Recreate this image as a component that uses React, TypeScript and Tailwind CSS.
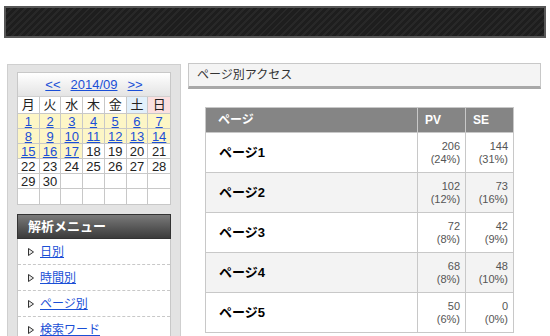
import React from 'react';

const jp = "font-['Liberation_Sans','Noto_Sans_CJK_JP',sans-serif]";

const weeks: (number | null)[][] = [
  [1, 2, 3, 4, 5, 6, 7],
  [8, 9, 10, 11, 12, 13, 14],
  [15, 16, 17, 18, 19, 20, 21],
  [22, 23, 24, 25, 26, 27, 28],
  [29, 30, null, null, null, null, null],
  [null, null, null, null, null, null, null],
];

const days = ['月', '火', '水', '木', '金', '土', '日'];

const menu = ['日別', '時間別', 'ページ別', '検索ワード'];

const rows = [
  { name: 'ページ1', pv: '206', pvp: '(24%)', se: '144', sep: '(31%)' },
  { name: 'ページ2', pv: '102', pvp: '(12%)', se: '73', sep: '(16%)' },
  { name: 'ページ3', pv: '72', pvp: '(8%)', se: '42', sep: '(9%)' },
  { name: 'ページ4', pv: '68', pvp: '(8%)', se: '48', sep: '(10%)' },
  { name: 'ページ5', pv: '50', pvp: '(6%)', se: '0', sep: '(0%)' },
];

function Calendar() {
  return (
    <div className="border border-[#c8c8c8] bg-white">
      <div className="h-[24px] flex items-center justify-center gap-[10px] bg-gradient-to-b from-white to-[#e4e4e4] border-b border-[#d0d0d0] text-[13px] text-[#1a4fd6]">
        <a className="underline cursor-pointer">&lt;&lt;</a>
        <a className="underline cursor-pointer">2014/09</a>
        <a className="underline cursor-pointer">&gt;&gt;</a>
      </div>
      <div className="grid grid-cols-7 text-[13px] leading-[15px]">
        {days.map((d, i) => (
          <div
            key={d}
            className={`h-[17px] leading-[16px] text-center border-b border-[#c8c8c8] ${i < 6 ? 'border-r' : ''} ${
              i === 5 ? 'bg-[#e2f0fb]' : i === 6 ? 'bg-[#fbe0e0]' : 'bg-white'
            } text-[#222]`}
          >
            {d}
          </div>
        ))}
        {weeks.flat().map((n, i) => {
          const linked = n !== null && n <= 17;
          return (
            <div
              key={i}
              className={`h-[15px] text-center border-[#c8c8c8] ${i % 7 < 6 ? 'border-r' : ''} ${
                i < 35 ? 'border-b' : ''
              } ${linked ? 'bg-[#fdf6c6]' : 'bg-white'}`}
            >
              {n !== null &&
                (linked ? (
                  <a className="text-[#1a4fd6] underline">{n}</a>
                ) : (
                  <span className="text-[#222]">{n}</span>
                ))}
            </div>
          );
        })}
      </div>
    </div>
  );
}

function Menu() {
  return (
    <div className="mt-[9px]">
      <div className="h-[25px] flex items-center pl-[10px] bg-gradient-to-b from-[#7a7a7a] to-[#3c3c3c] border border-[#333] text-white font-bold text-[13px]">
        解析メニュー
      </div>
      <div className="bg-white border-x border-[#c8c8c8]">
        {menu.map((m) => (
          <div key={m} className="h-[26px] flex items-center pl-[10px] border-b border-dashed border-[#c8c8c8]">
            <svg width="6" height="8" viewBox="0 0 6 8" className="mr-[6px]">
              <path d="M0.5 0.5 L5.5 4 L0.5 7.5 Z" fill="#e8e8e8" stroke="#333" strokeWidth="1" />
            </svg>
            <a className="text-[12px] text-[#1a4fd6] underline">{m}</a>
          </div>
        ))}
      </div>
    </div>
  );
}

function Num({ a, b }: { a: string; b: string }) {
  return (
    <div className="text-right pr-[5px] text-[11px] leading-[13px] text-[#555]">
      <div>{a}</div>
      <div>{b}</div>
    </div>
  );
}

export default function App() {
  return (
    <div className={`w-[550px] h-[336px] overflow-hidden bg-white ${jp}`}>
      {/* Top bar */}
      <div className="mx-[4px] mt-[6px] h-[32px] border-2 border-[#575757] bg-[repeating-linear-gradient(135deg,#1e1e1e_0px,#1e1e1e_3px,#282828_3px,#282828_5px)]" />

      <div className="flex mt-[25px] pl-[7px] gap-[7px]">
        {/* Sidebar */}
        <div className="w-[174px] h-[280px] shrink-0 mt-[1px] border border-[#cfcfcf] bg-[#e3e3e3] px-[9px] pt-[7px]">
          <Calendar />
          <Menu />
        </div>

        {/* Main */}
        <div className="w-[353px]">
          <div className="h-[26px] flex items-center pl-[8px] bg-[#f4f4f4] border border-[#c8c8c8] border-b-[3px] border-b-[#a8a8a8] text-[12px] text-[#333]">
            ページ別アクセス
          </div>

          <table className="ml-[17px] mt-[18px] w-[309px] border-collapse">
            <thead>
              <tr className="h-[25px] bg-[#858585] text-white text-[12px] font-bold text-left">
                <th className="w-[213px] pl-[12px] border border-[#c8c8c8] font-bold">ページ</th>
                <th className="w-[48px] pl-[7px] border border-[#c8c8c8] font-bold">PV</th>
                <th className="w-[48px] pl-[7px] border border-[#c8c8c8] font-bold">SE</th>
              </tr>
            </thead>
            <tbody>
              {rows.map((r, i) => (
                <tr key={r.name} className={`h-[40px] ${i % 2 === 1 ? 'bg-[#f3f3f3]' : 'bg-white'}`}>
                  <td className="pl-[13px] border border-[#c8c8c8] text-[13px] font-bold text-black">{r.name}</td>
                  <td className="border border-[#c8c8c8]">
                    <Num a={r.pv} b={r.pvp} />
                  </td>
                  <td className="border border-[#c8c8c8]">
                    <Num a={r.se} b={r.sep} />
                  </td>
                </tr>
              ))}
            </tbody>
          </table>
        </div>
      </div>
    </div>
  );
}
